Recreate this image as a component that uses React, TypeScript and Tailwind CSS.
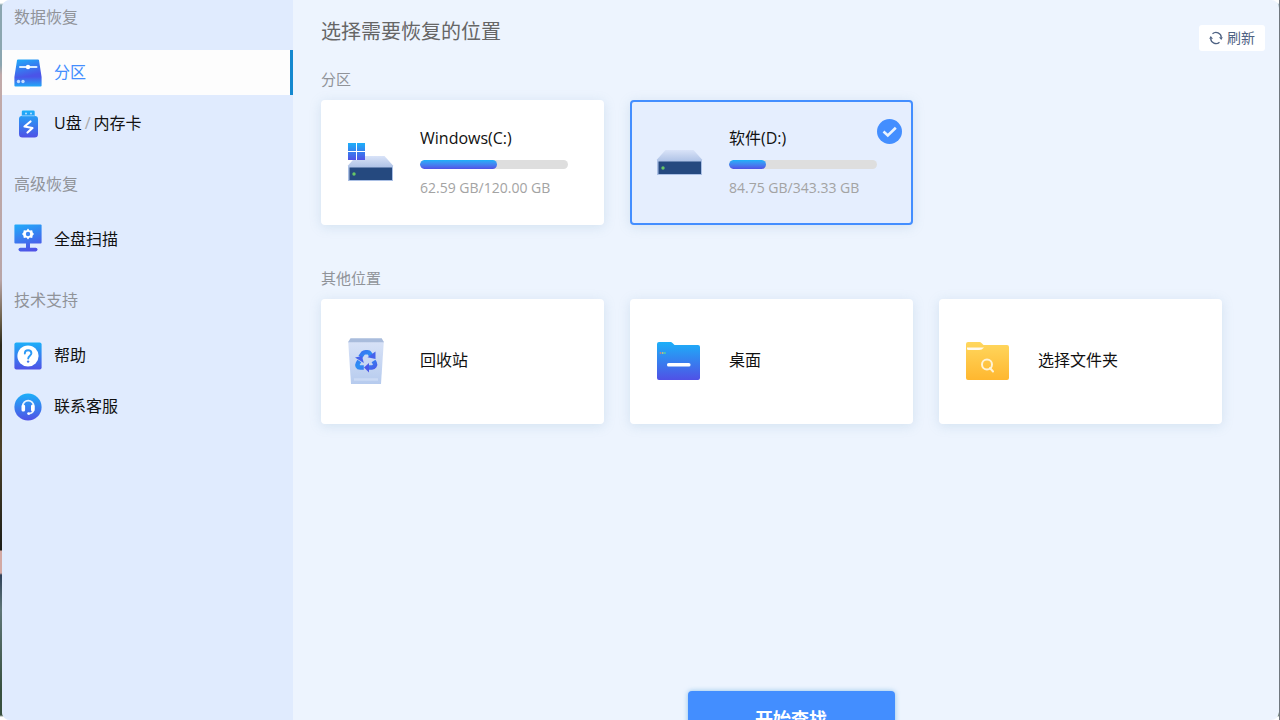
import React from 'react';
import clsx from 'clsx';

const GRADIENT_TOP = '#1cb0f9';
const GRADIENT_BOTTOM = '#5051e6';

function BlueGradient({ id }: { id: string }) {
  return (
    <defs>
      <linearGradient id={id} x1="0" y1="0" x2="0" y2="1">
        <stop offset="0" stopColor={GRADIENT_TOP} />
        <stop offset="1" stopColor={GRADIENT_BOTTOM} />
      </linearGradient>
    </defs>
  );
}

function PartitionIcon() {
  return (
    <svg width="28" height="28" viewBox="0 0 28 28">
      <defs>
        <linearGradient id="partition" x1="0" y1="0" x2="0.4" y2="1">
          <stop offset="0" stopColor="#1eaefa" />
          <stop offset="1" stopColor="#4a55e8" />
        </linearGradient>
        <linearGradient id="partitionBase" x1="0" y1="0" x2="0" y2="1">
          <stop offset="0" stopColor="#4b56e8" />
          <stop offset="1" stopColor="#22a8f8" />
        </linearGradient>
      </defs>
      <path d="M4 .5h20a1 1 0 0 1 1 .8L27.6 18H.4L3 1.3A1 1 0 0 1 4 .5z" fill="url(#partition)" />
      <path d="M.4 18h27.2v8.500a1 1 0 0 1-1 1H1.400a1 1 0 0 1-1-1z" fill="url(#partitionBase)" />
      <path d="M6 8h16.500" stroke="#d9ecff" strokeWidth="2" strokeLinecap="round" />
      <circle cx="14" cy="8" r="2.2" fill="#fff" />
      <circle cx="4.500" cy="22.500" r="1.700" fill="#c4dcff" />
      <circle cx="9" cy="22.500" r="1.700" fill="#c4dcff" />
    </svg>
  );
}

function UsbIcon() {
  return (
    <svg width="28" height="28" viewBox="0 0 28 28">
      <BlueGradient id="usb" />
      <path
        d="M9 .5h10.500a1.200 1.200 0 0 1 1.200 1.200V6H21a3 3 0 0 1 3 3v15a3.500 3.500 0 0 1-3.500 3.500h-12A3.500 3.500 0 0 1 5 24V9a3 3 0 0 1 2.800-3V1.700A1.200 1.200 0 0 1 9 .5z"
        fill="url(#usb)"
      />
      <path d="M8 5.800h12.500" stroke="#a9d9ff" strokeWidth="0.8" />
      <circle cx="12" cy="3.500" r="1" fill="#b9e3ff" />
      <circle cx="17" cy="3.500" r="1" fill="#b9e3ff" />
      <path d="M16.500 11.500 10.500 16.500 18.500 18 13.500 22.500" fill="none" stroke="#fff" strokeWidth="2.2" strokeLinecap="round" strokeLinejoin="round" />
    </svg>
  );
}

function ScanIcon() {
  return (
    <svg width="28" height="28" viewBox="0 2 28 28" className="overflow-visible">
      <defs>
        <linearGradient id="scan" gradientUnits="userSpaceOnUse" x1="6" y1="0" x2="14" y2="28">
          <stop offset="0" stopColor="#22a9fa" />
          <stop offset="1" stopColor="#5051e6" />
        </linearGradient>
      </defs>
      <g fill="url(#scan)">
        <rect x=".4" y=".4" width="27.2" height="19" rx="1" />
        <rect x="12" y="19" width="4" height="6" />
        <rect x="4.500" y="23.800" width="19" height="3.600" rx="1.800" />
      </g>
      <path
        d="M14 4.600l1.600 2 2.600-.4.500 2.400L20 10l-1.300 1.500-.5 2.400-2.600-.4-1.600 2-1.600-2-2.600.4-.5-2.400L8 10l1.300-1.400.5-2.400 2.600.4z"
        fill="#fff"
      />
      <circle cx="14" cy="10" r="2.2" fill="#3b86f4" />
    </svg>
  );
}

function HelpIcon() {
  return (
    <svg width="28" height="28" viewBox="0 0 28 28">
      <BlueGradient id="help" />
      <rect x=".4" y=".4" width="27.2" height="27.2" rx="2" fill="url(#help)" />
      <circle cx="14" cy="14" r="10.6" fill="#fff" />
      <path d="M10.800 11.600c0-2 1.400-3.400 3.300-3.400s3.300 1.300 3.300 3c0 2.400-3.200 2.600-3.200 5.400" fill="none" stroke="#2e9bf6" strokeWidth="1.9" strokeLinecap="round" />
      <circle cx="14.100" cy="19.600" r="1.200" fill="#3f78f0" />
    </svg>
  );
}

function ServiceIcon() {
  return (
    <svg width="28" height="28" viewBox="0 0 28 28">
      <BlueGradient id="service" />
      <circle cx="14" cy="14" r="13.6" fill="url(#service)" />
      <path d="M8.800 14v-1a5.400 5.400 0 0 1 10.800 0v3c0 2.600-1.800 4.200-4.200 4.600" fill="none" stroke="#e6f3ff" strokeWidth="1.7" strokeLinecap="round" />
      <rect x="7.500" y="11.500" width="3.600" height="7" rx="1.600" fill="#fff" />
      <rect x="17" y="11.500" width="3.600" height="7" rx="1.600" fill="#fff" />
      <circle cx="14.600" cy="20.600" r="1.400" fill="#fff" />
    </svg>
  );
}

function DriveIcon({ id, system = false }: { id: string; system?: boolean }) {
  return (
    <svg width="48" height="48" viewBox={system ? '0 -1 48 48' : '0 5 48 48'}>
      <BlueGradient id={`${id}Logo`} />
      <defs>
        <linearGradient id={`${id}Lid`} x1="0" y1="0" x2="0" y2="1">
          <stop offset="0" stopColor="#d9e3f8" />
          <stop offset="0.5" stopColor="#aabfe4" />
        </linearGradient>
      </defs>
      <path d="M9.500 16h28L46 25.500V41H1V25.500z" fill={`url(#${id}Lid)`} />
      <rect x="2.500" y="27.500" width="42.500" height="12.500" fill="#25497f" />
      <circle cx="7" cy="34" r="1.7" fill="#67c765" />
      {system && (
        <>
          <rect x="1" y="3" width="17" height="17" fill={`url(#${id}Logo)`} />
          <path d="M9.500 3v17M1 11.500h17" stroke="#fff" strokeWidth="1" />
        </>
      )}
    </svg>
  );
}

function RecycleIcon() {
  return (
    <svg width="48" height="48" viewBox="0 0 48 48">
      <defs>
        <linearGradient id="bin" x1="0" y1="0" x2="0" y2="1">
          <stop offset="0" stopColor="#d8e2f7" />
          <stop offset="1" stopColor="#b6cbee" />
        </linearGradient>
        <linearGradient id="recycle" gradientUnits="userSpaceOnUse" x1="10" y1="14" x2="26" y2="34">
          <stop offset="0" stopColor="#3b6df0" />
          <stop offset="0.5" stopColor="#2b90f5" />
          <stop offset="1" stopColor="#4a5be9" />
        </linearGradient>
      </defs>
      <path d="M1.200 4.500h35.600L34 47H4z" fill="url(#bin)" />
      <path d="M3.500 1.200h31.200l2.300 4H1z" fill="#a9bcdc" />
      <path d="M7 42.500h24" stroke="#cbdaf4" strokeWidth="2.5" />
      <g fill="none" stroke="url(#recycle)" strokeWidth="4.5">
        <path d="M13.300 20 16 16.200Q17 15.200 18.500 15.200h2q1.500 0 2.200 1.200l1.600 2.600" />
        <path d="M26.500 24l1.300 2.200q.8 1.500-.2 2.800-.9 1.400-2.600 1.400h-4" />
        <path d="M16.800 30.600h-3.500q-2 0-2.600-1.300-.6-1.400.2-2.900l1.400-2.400" />
      </g>
      <path d="M28.500 14.500v7.500l-8-1.800z" fill="#4663ec" />
      <path d="M22 26v9.500l-5-5z" fill="#4a58e9" />
      <path d="M8 20.500l7-1.500 1.800 7z" fill="#4663ec" />
    </svg>
  );
}

function FolderIcon() {
  return (
    <svg width="48" height="48" viewBox="0 0 48 48">
      <BlueGradient id="desktop" />
      <path d="M3 5h11.500q1.200 0 2 .9L18.500 8H42a2 2 0 0 1 2 2v31a2 2 0 0 1-2 2H3a2 2 0 0 1-2-2V7a2 2 0 0 1 2-2z" fill="url(#desktop)" />
      <circle cx="4.500" cy="16" r=".9" fill="#d3837d" />
      <circle cx="6.700" cy="16" r=".9" fill="#c4c77a" />
      <circle cx="8.900" cy="16" r=".9" fill="#55d69a" />
      <rect x="11" y="26" width="23.5" height="3.600" rx="1.6" fill="#fff" />
    </svg>
  );
}

function SearchFolderIcon() {
  return (
    <svg width="48" height="48" viewBox="0 0 48 48">
      <defs>
        <linearGradient id="yellow" x1="0" y1="0" x2="0" y2="1">
          <stop offset="0" stopColor="#ffd75e" />
          <stop offset="1" stopColor="#ffb72f" />
        </linearGradient>
      </defs>
      <path d="M3 5h11.500q1.200 0 2 .9L18.500 8H42a2 2 0 0 1 2 2v31a2 2 0 0 1-2 2H3a2 2 0 0 1-2-2V7a2 2 0 0 1 2-2z" fill="url(#yellow)" />
      <path d="M2 10.500h17q-2 2.500-5 2.500H3.500q-1.500 0-1.500-1z" fill="#fffaf0" />
      <circle cx="22" cy="27.500" r="5" fill="none" stroke="#fff3d6" strokeWidth="2" />
      <path d="m25 31 3 3.500" stroke="#fff3d6" strokeWidth="2" strokeLinecap="round" />
    </svg>
  );
}

function RefreshIcon() {
  return (
    <svg width="14" height="14" viewBox="0 0 14 14" fill="none" stroke="#4e6283" strokeWidth="1.3">
      <path d="M3.500 2.700A5.300 5.300 0 0 1 12.300 6.500" />
      <path d="M10.500 11.300A5.300 5.300 0 0 1 1.700 7.500" />
      <path d="M10 6.300h3.800L12.300 9z" fill="#4e6283" stroke="none" />
      <path d="M4 7.700H.2L1.700 5z" fill="#4e6283" stroke="none" />
    </svg>
  );
}

interface NavItemProps {
  icon: React.ReactNode;
  active?: boolean;
  children: React.ReactNode;
}

function NavItem({ icon, active = false, children }: NavItemProps) {
  return (
    <button
      type="button"
      className={clsx(
        'flex h-[45px] w-full items-center gap-3 border-r-3 pl-3 text-left text-base',
        active ? 'border-[#1488cf] bg-[#fdfdfd] text-[#438eff]' : 'border-transparent text-[#111]'
      )}
    >
      {icon}
      <span className="pb-[2px]">{children}</span>
    </button>
  );
}

function NavGroup({ title, children }: { title: string; children: React.ReactNode }) {
  return (
    <section>
      <h2 className="mb-[21px] pl-3 text-base leading-6 text-[#909399]">{title}</h2>
      <div className="flex flex-col gap-[6px]">{children}</div>
    </section>
  );
}

interface CardProps {
  icon: React.ReactNode;
  name: string;
  used?: number;
  total?: number;
  selected?: boolean;
}

function LocationCard({ icon, name, used, total, selected = false }: CardProps) {
  const hasUsage = used !== undefined && total !== undefined;

  return (
    <button
      type="button"
      className={clsx(
        'relative flex h-[125px] items-center rounded border-2 pl-6 text-left shadow-[0_2px_12px_rgba(120,165,190,0.22)]',
        selected ? 'border-[#438eff] bg-[#e5eefe]' : 'border-white bg-white',
        !hasUsage && 'pb-[2px]'
      )}
    >
      {icon}
      <span className={clsx('ml-[25px] block w-[148px]', !hasUsage && 'pb-[2px]')}>
        <span className="block text-base leading-[22px] text-[#111]">{name}</span>
        {hasUsage && (
          <>
            <span className="mt-[11px] block h-[9px] overflow-hidden rounded-full bg-[#dedede]">
              <span
                className="block h-full rounded-full bg-linear-to-b from-[#1cb0f9] to-[#5051e6]"
                style={{ width: `${(used / total) * 100}%` }}
              />
            </span>
            <span className="mt-[9px] block text-sm leading-5 text-[#a3a3a3]">
              {used.toFixed(2)} GB/{total.toFixed(2)} GB
            </span>
          </>
        )}
      </span>
      {selected && (
        <svg className="absolute top-[17px] right-[9px]" width="25" height="25" viewBox="0 0 25 25">
          <circle cx="12.500" cy="12.500" r="12.5" fill="#438eff" />
          <path d="m6.500 12.500 4.300 4 8-7.800" fill="none" stroke="#eaf3ff" strokeWidth="2.6" />
        </svg>
      )}
    </button>
  );
}

export default function App() {
  return (
    <div className="h-screen overflow-hidden border-r border-[#70777e] bg-[linear-gradient(to_bottom,#fff_0,#fff_3px,#8ba6b0_5px,#8ba6b0_65px,#c2aaa9_75px,#b9a5a7_280px,#6a5e48_320px,#2b2a1c_345px,#4c4128_450px,#1c1d18_550px,#d3a9a4_551px,#d3a9a4_573px,#31435a_575px,#5f7677_610px,#38503f_690px,#38503f_715px,#fff_717px)] pl-[2px] font-['Open_Sans','Noto_Sans_CJK_SC',sans-serif]">
      <div className="flex h-full overflow-hidden rounded-lg bg-[#edf4fe]">
        <nav className="flex w-[291px] shrink-0 flex-col gap-[26px] bg-[#e0ebfe] pt-[5px]">
          <NavGroup title="数据恢复">
            <NavItem icon={<PartitionIcon />} active>分区</NavItem>
            <NavItem icon={<UsbIcon />}>
              U盘<span className="mx-[3px] text-[#aaa]">/</span>内存卡
            </NavItem>
          </NavGroup>
          <NavGroup title="高级恢复">
            <NavItem icon={<ScanIcon />}>全盘扫描</NavItem>
          </NavGroup>
          <NavGroup title="技术支持">
            <NavItem icon={<HelpIcon />}>帮助</NavItem>
            <NavItem icon={<ServiceIcon />}>联系客服</NavItem>
          </NavGroup>
        </nav>

        <main className="min-w-0 flex-1 pl-7">
          <header className="flex h-[67px] items-start justify-between pr-[14px]">
            <h1 className="pt-[17px] text-xl leading-[30px] text-[#666]">选择需要恢复的位置</h1>
            <button
              type="button"
              className="mt-[25px] flex h-[26px] w-[66px] items-center justify-center gap-1 rounded-[3px] bg-white text-sm text-[#4e6283]"
            >
              <RefreshIcon />
              刷新
            </button>
          </header>

          <div className="pr-[57px]">
            <section>
              <h2 className="mb-[9px] text-[15px] leading-6 text-[#909399]">分区</h2>
              <div className="grid grid-cols-3 gap-[26px]">
                <LocationCard icon={<DriveIcon id="driveC" system />} name="Windows(C:)" used={62.59} total={120} />
                <LocationCard icon={<DriveIcon id="driveD" />} name="软件(D:)" used={84.75} total={343.33} selected />
              </div>
            </section>
            <section className="mt-[41px]">
              <h2 className="mb-[9px] text-[15px] leading-6 text-[#909399]">其他位置</h2>
              <div className="grid grid-cols-3 gap-[26px]">
                <LocationCard icon={<RecycleIcon />} name="回收站" />
                <LocationCard icon={<FolderIcon />} name="桌面" />
                <LocationCard icon={<SearchFolderIcon />} name="选择文件夹" />
              </div>
            </section>
          </div>

          <footer className="mt-[267px] flex justify-center pr-[18px]">
            <button
              type="button"
              className="h-14 w-[207px] rounded bg-[#438eff] text-lg font-bold text-white shadow-[0_0_5px_rgba(80,160,220,0.6)]"
            >
              开始查找
            </button>
          </footer>
        </main>
      </div>
    </div>
  );
}
